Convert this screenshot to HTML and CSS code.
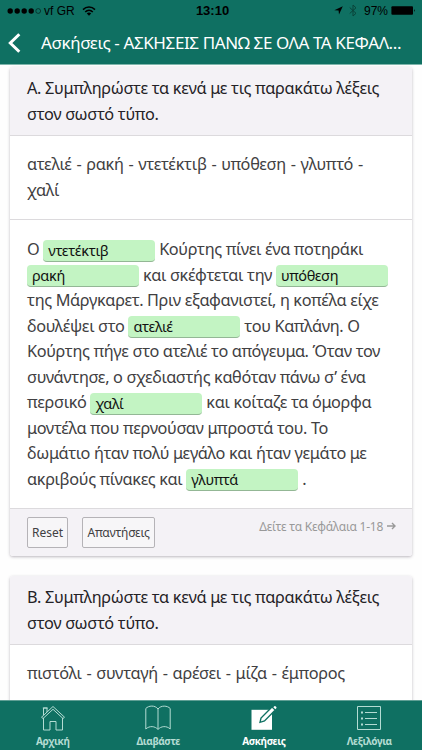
FILE: index.html
```html
<!DOCTYPE html>
<html lang="el">
<head>
  <meta charset="UTF-8">
  <meta name="viewport" content="width=device-width, initial-scale=1.0">
  <title>Ασκήσεις</title>
  <link rel="stylesheet" href="styles.css">
</head>
<body>
  <div class="app">
    <header class="header">
      <div class="status">
        <div class="status-left">
          <svg width="36" height="8" viewBox="0 0 36 8">
            <circle cx="3.2" cy="4" r="2.7"/>
            <circle cx="10.2" cy="4" r="2.7"/>
            <circle cx="17.2" cy="4" r="2.7"/>
            <circle cx="24.2" cy="4" r="2.7"/>
            <circle cx="31.2" cy="4" r="2.4" fill="none" stroke="#000" stroke-width=".5"/>
          </svg>
          <span class="carrier">vf GR</span>
          <svg class="wifi" width="14" height="10" viewBox="0 0 14 10" fill="none" stroke="#000" stroke-width="1.5">
            <path d="M1 3.6C4.4.2 9.6.2 13 3.6M3.2 6C5.4 3.8 8.6 3.8 10.8 6"/>
            <path d="M4.8 7.5Q7 5.6 9.2 7.5L7 9.8Z" fill="#000" stroke="none"/>
          </svg>
        </div>
        <div class="clock">13:10</div>
        <div class="status-right">
          <svg width="9" height="9" viewBox="0 0 9 9"><path d="M8.8.3L5 8.6 4.6 4.6.3 4.2Z"/></svg>
          <svg class="bluetooth" width="8" height="13" viewBox="0 0 8 13" fill="none" stroke="#0a4339" stroke-width="1"><path d="M.7 3.5L7 9.3 4 12V1L7 3.8.7 9.5"/></svg>
          <span class="percent">97%</span>
          <svg width="25" height="9" viewBox="0 0 25 9"><rect x=".4" y=".2" width="21.6" height="8.6" rx="1"/><path d="M23 3q1.6 1.5 0 3Z"/></svg>
        </div>
      </div>
      <div class="title-bar">
        <svg class="back" width="13" height="20" viewBox="0 0 13 20" fill="none" stroke="#fff" stroke-width="3"><path d="M11.3 1.2L2.3 10l9 8.8"/></svg>
        <h1>Ασκήσεις - ΑΣΚΗΣΕΙΣ ΠΑΝΩ ΣΕ ΟΛΑ ΤΑ ΚΕΦΑΛ...</h1>
      </div>
    </header>

    <main class="content">
      <section class="card">
        <h2>
          <span class="line">Α. Συμπληρώστε τα κενά με τις παρακάτω λέξεις</span>
          <span class="line">στον σωστό τύπο.</span>
        </h2>
        <div class="words">
          <span class="line">ατελιέ - ρακή - ντετέκτιβ - υπόθεση - γλυπτό -</span>
          <span class="line">χαλί</span>
        </div>
        <div class="exercise">
          <span class="line">Ο <span class="blank">ντετέκτιβ</span> Κούρτης πίνει ένα ποτηράκι</span>
          <span class="line"><span class="blank">ρακή</span> και σκέφτεται την <span class="blank">υπόθεση</span></span>
          <span class="line">της Μάργκαρετ. Πριν εξαφανιστεί, η κοπέλα είχε</span>
          <span class="line">δουλέψει στο <span class="blank">ατελιέ</span> του Καπλάνη. Ο</span>
          <span class="line">Κούρτης πήγε στο ατελιέ το απόγευμα. Όταν τον</span>
          <span class="line">συνάντησε, ο σχεδιαστής καθόταν πάνω σ’ ένα</span>
          <span class="line">περσικό <span class="blank">χαλί</span> και κοίταζε τα όμορφα</span>
          <span class="line">μοντέλα που περνούσαν μπροστά του. Το</span>
          <span class="line">δωμάτιο ήταν πολύ μεγάλο και ήταν γεμάτο με</span>
          <span class="line">ακριβούς πίνακες και <span class="blank">γλυπτά</span> .</span>
        </div>
        <div class="card-footer">
          <button class="reset">Reset</button>
          <button class="answers">Απαντήσεις</button>
          <div class="hint">Δείτε τα Κεφάλαια 1-18
            <svg width="9" height="8" viewBox="0 0 9 8" fill="none" stroke="#999" stroke-width="1.4"><path d="M0 4h8M5 1l3 3-3 3"/></svg>
          </div>
        </div>
      </section>

      <section class="card">
        <h2>
          <span class="line">Β. Συμπληρώστε τα κενά με τις παρακάτω λέξεις</span>
          <span class="line">στον σωστό τύπο.</span>
        </h2>
        <div class="words">
          <span class="line">πιστόλι - συνταγή - αρέσει - μίζα - έμπορος</span>
        </div>
      </section>
    </main>

    <nav class="tabs">
      <a class="tab">
        <svg width="26" height="26" viewBox="0 0 26 26" fill="none" stroke="#b4dcd3" stroke-width="1">
          <path d="M1.5 12.2L13 1.5l11.5 10.7-1.5 1.3L13 4.3 3 13.5Z"/>
          <path d="M3.5 10V3H7v4M2.8 3h5M3.5 13v12H10v-8.5h6V25h6.5V13"/>
        </svg>
        <span>Αρχική</span>
      </a>
      <a class="tab">
        <svg width="26" height="26" viewBox="0 0 26 26" fill="none" stroke="#b4dcd3" stroke-width="1">
          <path d="M13 4C10-.1 3.5.5.8 3.5V24C4.5 20.5 10 21 13 24.5 16 21 21.5 20.5 25.2 24V3.5C22.5.5 16 0 13 4ZM13 4v20"/>
        </svg>
        <span>Διαβάστε</span>
      </a>
      <a class="tab active">
        <svg width="26" height="26" viewBox="0 0 26 26">
          <path d="M.5 4.8H21v20H.5Z" fill="#fff"/>
          <path d="M9 17.3l1-4.3L21 2l3.3 3L13.5 16Z" fill="#fff" stroke="#0f7062" stroke-width="1.4"/>
          <path d="M22.3 2.2l1-1q.6-.5 1.2 0l.8.8q.5.6 0 1.2l-1 1Z" fill="#fff"/>
        </svg>
        <span>Ασκήσεις</span>
      </a>
      <a class="tab">
        <svg width="26" height="26" viewBox="0 0 26 26" fill="none" stroke="#b4dcd3" stroke-width="1">
          <path d="M1.5 1.5h23v23h-23Z"/>
          <path d="M9 7.5h12M9 13.5h12M9 19.5h12"/>
          <path d="M5 7.5h2M5 13.5h2M5 19.5h2" stroke-width="1.8"/>
        </svg>
        <span>Λεξιλόγια</span>
      </a>
    </nav>
  </div>
</body>
</html>
```
FILE: styles.css
```css
* {
  margin: 0;
  padding: 0;
  box-sizing: border-box;
}

body {
  font-family: "Noto Sans", "Open Sans", sans-serif;
  background-color: #fefefe;
  color: #414042;
}

svg {
  display: block;
  flex-shrink: 0;
}

.app {
  display: flex;
  flex-direction: column;
  height: 750px;
  overflow: hidden;
}

.header {
  height: 65px;
  flex-shrink: 0;
  background-color: #0f7062;
  border-bottom: 1px solid #7eb5ac;
}

.status {
  display: grid;
  grid-template-columns: 1fr auto 1fr;
  align-items: center;
  height: 21px;
  padding: 0 6px 0 7px;
  font-family: "Liberation Sans", Arial, sans-serif;
  font-size: 12px;
  color: #000;
}

.status-left,
.status-right {
  display: flex;
  align-items: center;
}

.status-right {
  justify-content: flex-end;
}

.carrier {
  margin-left: 1px;
}

.wifi {
  margin-left: 7px;
}

.clock {
  padding-left: 2px;
  font-size: 13px;
  font-weight: bold;
}

.bluetooth {
  margin: 0 7px 0 6px;
}

.percent {
  margin-right: 3px;
}

.title-bar {
  display: flex;
  align-items: center;
  height: 43px;
  padding-left: 8px;
}

h1 {
  margin-left: 20px;
  font-size: 17px;
  font-weight: normal;
  letter-spacing: -0.39px;
  color: #fff;
  white-space: nowrap;
}

.content {
  flex: 1;
  min-height: 0;
  overflow: hidden;
  padding: 2px 10px 0;
}

.card {
  margin-bottom: 20px;
  border-radius: 3px;
  background-color: #fff;
  box-shadow: 0 1px 3px rgba(60, 50, 70, 0.35);
}

.line {
  display: block;
  white-space: nowrap;
}

h2 {
  height: 69px;
  padding: 9px 17px 0;
  border-bottom: 1px solid #dcdadd;
  border-radius: 3px 3px 0 0;
  background-color: #f4f2f6;
  font-size: 16.3px;
  font-weight: normal;
  line-height: 25.5px;
  letter-spacing: -0.31px;
  color: #242226;
}

.words {
  height: 84px;
  padding: 16px 17px 0;
  border-bottom: 1px solid #dcdadd;
  font-size: 16.3px;
  line-height: 25.5px;
  letter-spacing: -0.3px;
  word-spacing: 0.9px;
}

.exercise {
  height: 288px;
  padding: 17px 17px 0;
  font-size: 16.3px;
  line-height: 25.5px;
  letter-spacing: -0.35px;
}

.blank {
  display: inline-block;
  width: 112px;
  height: 22px;
  padding-left: 5px;
  border-bottom: 1px solid #93b795;
  border-radius: 4px;
  background-color: #c3f4c3;
  font-size: 14.5px;
  line-height: 21px;
  color: #111;
  vertical-align: middle;
}

.card-footer {
  display: flex;
  height: 48px;
  padding: 8px 16px 0 17px;
  border-top: 1px solid #dcdadd;
  border-radius: 0 0 3px 3px;
  background-color: #f4f2f6;
}

button {
  height: 31px;
  border: 1px solid #b5b3b7;
  border-radius: 2px;
  background-color: #f7f6f8;
  font-family: inherit;
  font-size: 12px;
  color: #414042;
}

.reset {
  width: 41px;
}

.answers {
  width: 73px;
  margin-left: 14px;
  letter-spacing: -0.25px;
}

.hint {
  display: flex;
  align-items: center;
  gap: 4px;
  height: 18px;
  margin-left: auto;
  font-size: 12px;
  letter-spacing: -0.25px;
  color: #999;
  white-space: nowrap;
}

.tabs {
  display: grid;
  grid-template-columns: repeat(4, 1fr);
  height: 50px;
  flex-shrink: 0;
  border-top: 1px solid #5f9f95;
  background-color: #0f7062;
}

.tab {
  display: flex;
  flex-direction: column;
  align-items: center;
  padding-top: 4px;
  font-size: 10px;
  font-weight: 700;
  line-height: 14px;
  letter-spacing: -0.4px;
  color: #b4dcd3;
}

.tab span {
  margin-top: 3px;
}

.tab.active {
  color: #fff;
}
```
